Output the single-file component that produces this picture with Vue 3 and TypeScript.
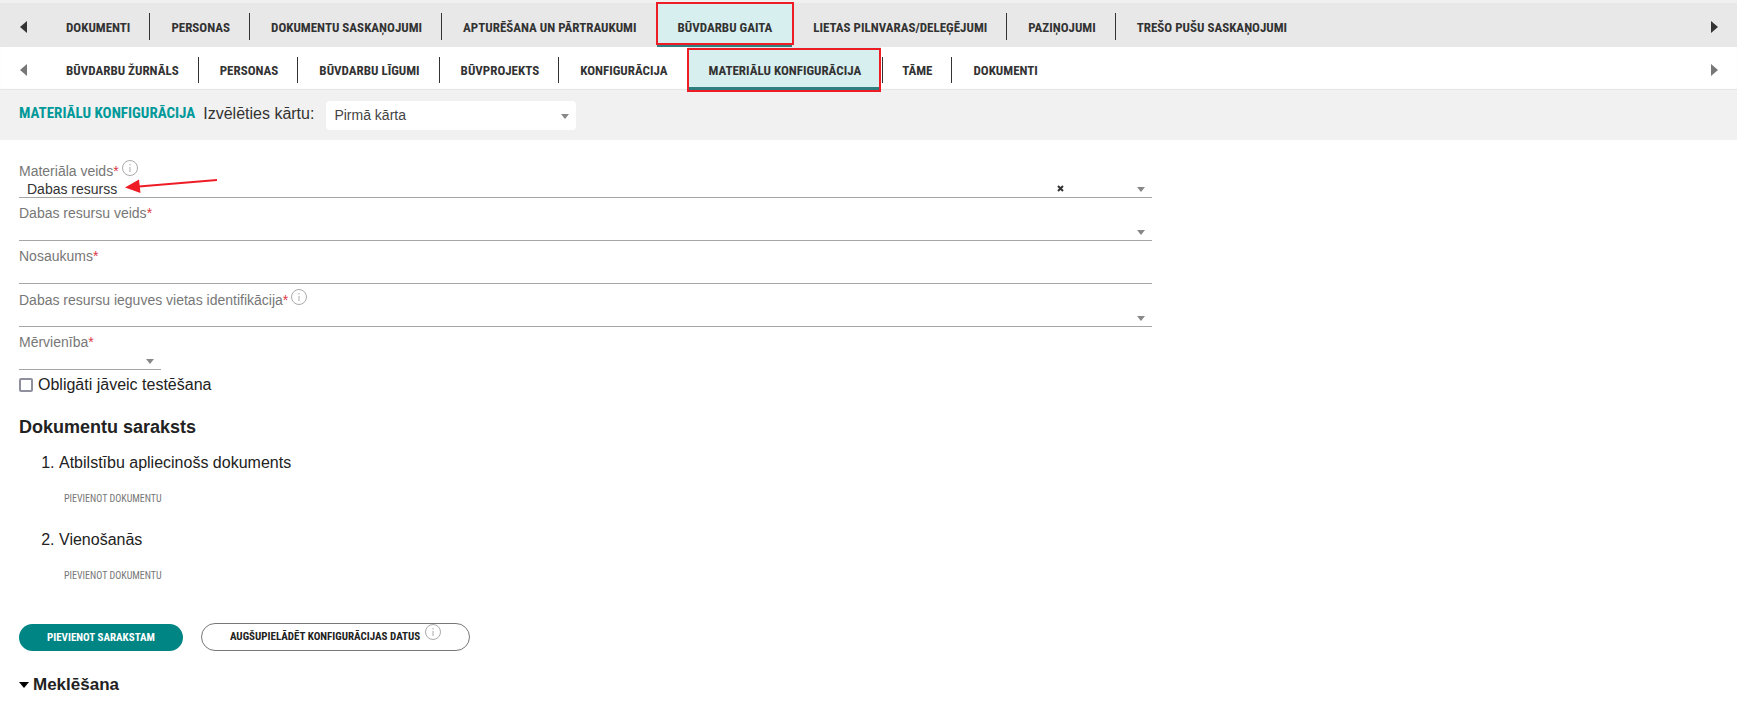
<script setup lang="ts">
import { ref } from 'vue'

interface Tab {
  label: string
  active?: boolean
}

const caseTabs: Tab[] = [
  { label: 'DOKUMENTI' },
  { label: 'PERSONAS' },
  { label: 'DOKUMENTU SASKAŅOJUMI' },
  { label: 'APTURĒŠANA UN PĀRTRAUKUMI' },
  { label: 'BŪVDARBU GAITA', active: true },
  { label: 'LIETAS PILNVARAS/DELEĢĒJUMI' },
  { label: 'PAZIŅOJUMI' },
  { label: 'TREŠO PUŠU SASKAŅOJUMI' },
]

const progressTabs: Tab[] = [
  { label: 'BŪVDARBU ŽURNĀLS' },
  { label: 'PERSONAS' },
  { label: 'BŪVDARBU LĪGUMI' },
  { label: 'BŪVPROJEKTS' },
  { label: 'KONFIGURĀCIJA' },
  { label: 'MATERIĀLU KONFIGURĀCIJA', active: true },
  { label: 'TĀME' },
  { label: 'DOKUMENTI' },
]

const rows = [
  { name: 'Lieta', kind: 'primary', tabs: caseTabs },
  { name: 'Būvdarbu gaita', kind: 'secondary', tabs: progressTabs },
]

const documents = ['Atbilstību apliecinošs dokuments', 'Vienošanās']

const stage = ref('Pirmā kārta')
const materialKind = ref('Dabas resurss')
const resourceKind = ref('')
const title = ref('')
const origin = ref('')
const unit = ref('')
const testing = ref(false)
</script>

<template>
  <div class="page">
    <nav v-for="row in rows" :key="row.kind" class="tabs" :class="row.kind" :aria-label="row.name">
      <button class="scroll" type="button" aria-label="Iepriekšējie">
        <svg width="7" height="12" viewBox="0 0 7 12"><path d="M7 0v12L0 6z" /></svg>
      </button>
      <div class="tab-list">
        <a v-for="tab in row.tabs" :key="tab.label" href="#" class="tab" :class="{ active: tab.active }">{{ tab.label }}</a>
      </div>
      <button class="scroll" type="button" aria-label="Nākamie">
        <svg width="7" height="12" viewBox="0 0 7 12"><path d="M0 0v12l7-6z" /></svg>
      </button>
    </nav>

    <header class="heading">
      <h1>MATERIĀLU KONFIGURĀCIJA</h1>
      <label for="stage">Izvēlēties kārtu:</label>
      <div class="select stage">
        <select id="stage" v-model="stage"><option>Pirmā kārta</option></select>
        <svg class="caret" width="8" height="5" viewBox="0 0 8 5"><path d="M0 0h8L4 5z" /></svg>
      </div>
    </header>

    <main>
      <form @submit.prevent>
        <div class="field">
          <label for="material">Materiāla veids<b>*</b>
            <svg class="info" width="16" height="16" viewBox="0 0 16 16"><circle cx="8" cy="8" r="7.5" /><path d="M8 4v1.5M8 7v5" /></svg>
          </label>
          <div class="select line">
            <select id="material" v-model="materialKind"><option>Dabas resurss</option><option value=""></option></select>
            <button class="clear" type="button" aria-label="Notīrīt" @click="materialKind = ''">
              <svg width="7" height="7" viewBox="0 0 7 7"><path d="M1 1l5 5M6 1L1 6" /></svg>
            </button>
            <svg class="caret" width="8" height="5" viewBox="0 0 8 5"><path d="M0 0h8L4 5z" /></svg>
            <svg class="arrow" width="94" height="16" viewBox="0 0 94 16"><path class="shaft" d="M14 8.500L92 2" /><path class="head" d="M0 9.500L14 1.500 15.500 15z" /></svg>
          </div>
        </div>

        <div class="field">
          <label for="resource">Dabas resursu veids<b>*</b></label>
          <div class="select line">
            <select id="resource" v-model="resourceKind"><option value=""></option></select>
            <svg class="caret" width="8" height="5" viewBox="0 0 8 5"><path d="M0 0h8L4 5z" /></svg>
          </div>
        </div>

        <div class="field">
          <label for="title">Nosaukums<b>*</b></label>
          <input id="title" v-model="title" class="line" type="text">
        </div>

        <div class="field">
          <label for="origin">Dabas resursu ieguves vietas identifikācija<b>*</b>
            <svg class="info" width="16" height="16" viewBox="0 0 16 16"><circle cx="8" cy="8" r="7.5" /><path d="M8 4v1.5M8 7v5" /></svg>
          </label>
          <div class="select line">
            <select id="origin" v-model="origin"><option value=""></option></select>
            <svg class="caret" width="8" height="5" viewBox="0 0 8 5"><path d="M0 0h8L4 5z" /></svg>
          </div>
        </div>

        <div class="field unit">
          <label for="unit">Mērvienība<b>*</b></label>
          <div class="select line">
            <select id="unit" v-model="unit"><option value=""></option></select>
            <svg class="caret" width="8" height="5" viewBox="0 0 8 5"><path d="M0 0h8L4 5z" /></svg>
          </div>
        </div>
      </form>

      <div class="check">
        <input id="testing" v-model="testing" type="checkbox">
        <label for="testing">Obligāti jāveic testēšana</label>
      </div>

      <h2>Dokumentu saraksts</h2>
      <ol>
        <li v-for="doc in documents" :key="doc">
          {{ doc }}
          <button class="add" type="button">PIEVIENOT DOKUMENTU</button>
        </li>
      </ol>

      <div class="actions">
        <button class="pill solid" type="button">PIEVIENOT SARAKSTAM</button>
        <button class="pill outline" type="button">
          AUGŠUPIELĀDĒT KONFIGURĀCIJAS DATUS
          <svg class="info" width="16" height="16" viewBox="0 0 16 16"><circle cx="8" cy="8" r="7.5" /><path d="M8 4v1.5M8 7v5" /></svg>
        </button>
      </div>

      <button class="search-toggle" type="button" aria-expanded="true">
        <svg width="10" height="6" viewBox="0 0 10 6"><path d="M0 0h10L5 6z" /></svg>
        Meklēšana
      </button>
    </main>
  </div>
</template>

<style>
body {
  margin: 0;
  background: #fff;
}
</style>

<style scoped>
.page {
  --narrow: "Roboto Condensed", "Liberation Sans Narrow", "Arial Narrow", "Liberation Sans", sans-serif;
  font: 16px/20px "Liberation Sans", Arial, sans-serif;
  color: #222;
  border-top: 3px solid #f0f0f0;
}

*,
*::before,
*::after {
  box-sizing: border-box;
}

button,
input,
select {
  margin: 0;
  padding: 0;
  border: 0;
  background: none;
  color: inherit;
  font: inherit;
}

button {
  cursor: pointer;
}

.tabs {
  display: flex;
  height: 44px;
}

.primary {
  background: #e8e8e8;
}

.secondary {
  height: 43px;
  background: #fff;
  box-shadow: inset 0 -1px 1px #e4e4e4;
}

.scroll {
  display: flex;
  align-items: center;
  justify-content: center;
  width: 46px;
  padding-top: 3px;
  fill: #333;
}

.secondary .scroll {
  fill: #777;
}

.tab-list {
  display: flex;
  flex: 1;
  gap: 1px;
}

.tab {
  position: relative;
  display: flex;
  align-items: center;
  padding: 6px 20px 0;
  color: #333;
  font: bold 13px/20px var(--narrow);
  text-decoration: none;
  white-space: nowrap;
}

.secondary .tab {
  padding-top: 5px;
}

.tab:not(.active, :last-child)::after {
  content: "";
  position: absolute;
  right: 0;
  top: 10px;
  bottom: 7px;
  width: 1px;
  background: #333;
}

.tab:has(+ .active)::after {
  display: none;
}

.secondary .active + .tab::before {
  content: "";
  position: absolute;
  left: 0;
  top: 10px;
  bottom: 7px;
  width: 1px;
  background: #333;
}

.tab.active {
  background: #d8efef;
  box-shadow: inset 0 -3px #2f7f80;
}

.tab.active::before {
  content: "";
  position: absolute;
  inset: -1px -2px 2px -1px;
  border: 2px solid #ee1c25;
}

.secondary .tab.active::before {
  inset: 1px 0 -2px -1px;
}

.heading {
  display: flex;
  align-items: center;
  height: 50px;
  padding: 0 19px;
  background: #f1f1f1;
  color: #333;
}

h1 {
  margin: 0 8px 4px 0;
  color: #009999;
  font: bold 15px/20px var(--narrow);
}

.heading label {
  margin-bottom: 2px;
}

.select {
  position: relative;
}

.select select {
  display: block;
  width: 100%;
  height: 100%;
  padding: 0 24px 0 8px;
  appearance: none;
  color: #444;
  font-size: 14px;
}

.caret {
  position: absolute;
  right: 7px;
  bottom: 5px;
  fill: #888;
  pointer-events: none;
}

.stage {
  width: 250px;
  height: 29px;
  margin-left: 12px;
  border-radius: 4px;
  background: #fff;
}

.stage .caret {
  bottom: 11px;
}

main {
  padding: 0 19px 24px;
}

form {
  display: flex;
  flex-direction: column;
  gap: 5px;
  width: 66.667%;
  padding-top: 20px;
}

.field label {
  display: block;
  height: 20px;
  color: #777;
  font-size: 14px;
}

.field b {
  color: #dc3545;
  font-weight: normal;
}

.info {
  fill: none;
  stroke: #aaa;
  stroke-width: 1;
}

.field .info {
  margin-left: 3px;
}

.line {
  display: block;
  width: 100%;
  height: 18px;
  border-bottom: 1px solid #a6a6a6;
}

.line select {
  color: #333;
  line-height: 16px;
}

.unit {
  width: 142px;
}

.clear {
  position: absolute;
  right: 84px;
  top: 0;
  bottom: 0;
  width: 14px;
  line-height: 0;
  stroke: #333;
  stroke-width: 2;
}

.arrow {
  position: absolute;
  left: 106px;
  top: -2px;
  pointer-events: none;
}

.shaft {
  stroke: #ee1c25;
  stroke-width: 2;
}

.head {
  fill: #ee1c25;
}

.check {
  display: flex;
  align-items: center;
  gap: 5px;
  height: 30px;
}

.check input {
  width: 14px;
  height: 14px;
  border: 2px solid #8f8f9d;
  border-radius: 2px;
  appearance: none;
}

.check input:checked {
  background: #008585;
}

h2 {
  margin: 17px 0 16px;
  font-size: 18px;
  line-height: 20px;
}

ol {
  margin: 0;
  padding-left: 40px;
}

li {
  height: 77px;
}

.add {
  display: block;
  margin: 16px 0 0 5px;
  color: #777;
  font: 10px/20px var(--narrow);
}

.actions {
  display: flex;
  align-items: center;
  gap: 18px;
  margin-top: 16px;
}

.pill {
  padding: 0 28px;
  border-radius: 14px;
  font: bold 11px/27px var(--narrow);
}

.solid {
  background: #008585;
  color: #fff;
}

.outline {
  border: 1px solid #777;
  line-height: 26px;
}

.outline .info {
  margin-left: 2px;
}

.search-toggle {
  display: flex;
  align-items: center;
  gap: 4px;
  margin-top: 24px;
  font-size: 17px;
  font-weight: bold;
}
</style>
